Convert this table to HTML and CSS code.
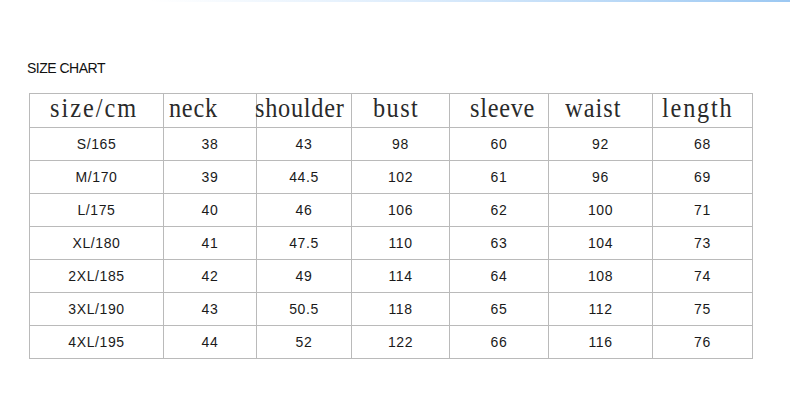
FILE: index.html
```html
<!DOCTYPE html>
<html>
<head>
<meta charset="utf-8">
<link rel="stylesheet" href="styles.css">
</head>
<body>
<div class="topline"></div>
<div class="page">
  <div class="title">SIZE CHART</div>
  <table class="chart">
    <colgroup>
      <col class="c1"><col class="c2"><col class="c3"><col class="c4"><col class="c5"><col class="c6"><col class="c7">
    </colgroup>
    <thead>
      <tr>
        <th class="h h-size"><span>size/cm</span></th>
        <th class="h h-neck"><span>neck</span></th>
        <th class="h h-shoulder"><span>shoulder</span></th>
        <th class="h h-bust"><span>bust</span></th>
        <th class="h h-sleeve"><span>sleeve</span></th>
        <th class="h h-waist"><span>waist</span></th>
        <th class="h h-length"><span>length</span></th>
      </tr>
    </thead>
    <tbody>
      <tr><td>S/165</td><td>38</td><td>43</td><td>98</td><td>60</td><td>92</td><td>68</td></tr>
      <tr><td>M/170</td><td>39</td><td>44.5</td><td>102</td><td>61</td><td>96</td><td>69</td></tr>
      <tr><td>L/175</td><td>40</td><td>46</td><td>106</td><td>62</td><td>100</td><td>71</td></tr>
      <tr><td>XL/180</td><td>41</td><td>47.5</td><td>110</td><td>63</td><td>104</td><td>73</td></tr>
      <tr><td>2XL/185</td><td>42</td><td>49</td><td>114</td><td>64</td><td>108</td><td>74</td></tr>
      <tr><td>3XL/190</td><td>43</td><td>50.5</td><td>118</td><td>65</td><td>112</td><td>75</td></tr>
      <tr><td>4XL/195</td><td>44</td><td>52</td><td>122</td><td>66</td><td>116</td><td>76</td></tr>
    </tbody>
  </table>
</div>
</body>
</html>
```
FILE: styles.css
```css
html, body {
  margin: 0;
  padding: 0;
  background: #ffffff;
}
body {
  width: 790px;
  height: 401px;
  overflow: hidden;
  font-family: "Liberation Sans", Arial, sans-serif;
}
.topline {
  height: 2px;
  margin-left: 150px;
  background: linear-gradient(to right, rgba(200,225,250,0) 0%, rgba(200,225,250,0.6) 40%, #9cc8f2 100%);
}
.page {
  padding: 58px 0 0 27px;
}
.title {
  font-size: 14px;
  line-height: 16px;
  letter-spacing: -0.5px;
  color: #111;
  margin-bottom: 17px;
}
.chart {
  margin-left: 2px;
  border-collapse: collapse;
  table-layout: fixed;
  width: 723px;
}
.c1 { width: 134px; }
.c2 { width: 93px; }
.c3 { width: 95px; }
.c4 { width: 98px; }
.c5 { width: 99px; }
.c6 { width: 104px; }
.c7 { width: 100px; }
.chart th, .chart td {
  border: 1px solid #bababa;
  padding: 0;
  overflow: visible;
  white-space: nowrap;
}
.chart td {
  height: 32px;
  text-align: center;
  font-size: 14px;
  letter-spacing: 0.6px;
  color: #1a1a1a;
  vertical-align: middle;
}
.chart th {
  height: 33px;
  font-weight: normal;
  vertical-align: middle;
  color: #2a2a2a;
}
.h span {
  display: inline-block;
  font-family: "Liberation Serif", "Times New Roman", serif;
  font-size: 27px;
  line-height: 26px;
  letter-spacing: 0.8px;
  transform: scaleX(0.9);
  transform-origin: left center;
  position: relative;
  top: -3px;
}
.h { text-align: left; }
.h-size span { margin-left: 20px; letter-spacing: 2.2px; }
.h-neck span { margin-left: 5px; }
.h-shoulder span { margin-left: -2px; }
.h-bust span { margin-left: 21px; letter-spacing: 1.6px; }
.h-sleeve span { margin-left: 20px; }
.h-waist span { margin-left: 16px; letter-spacing: 1.2px; }
.h-length span { margin-left: 9px; letter-spacing: 2px; }
```
